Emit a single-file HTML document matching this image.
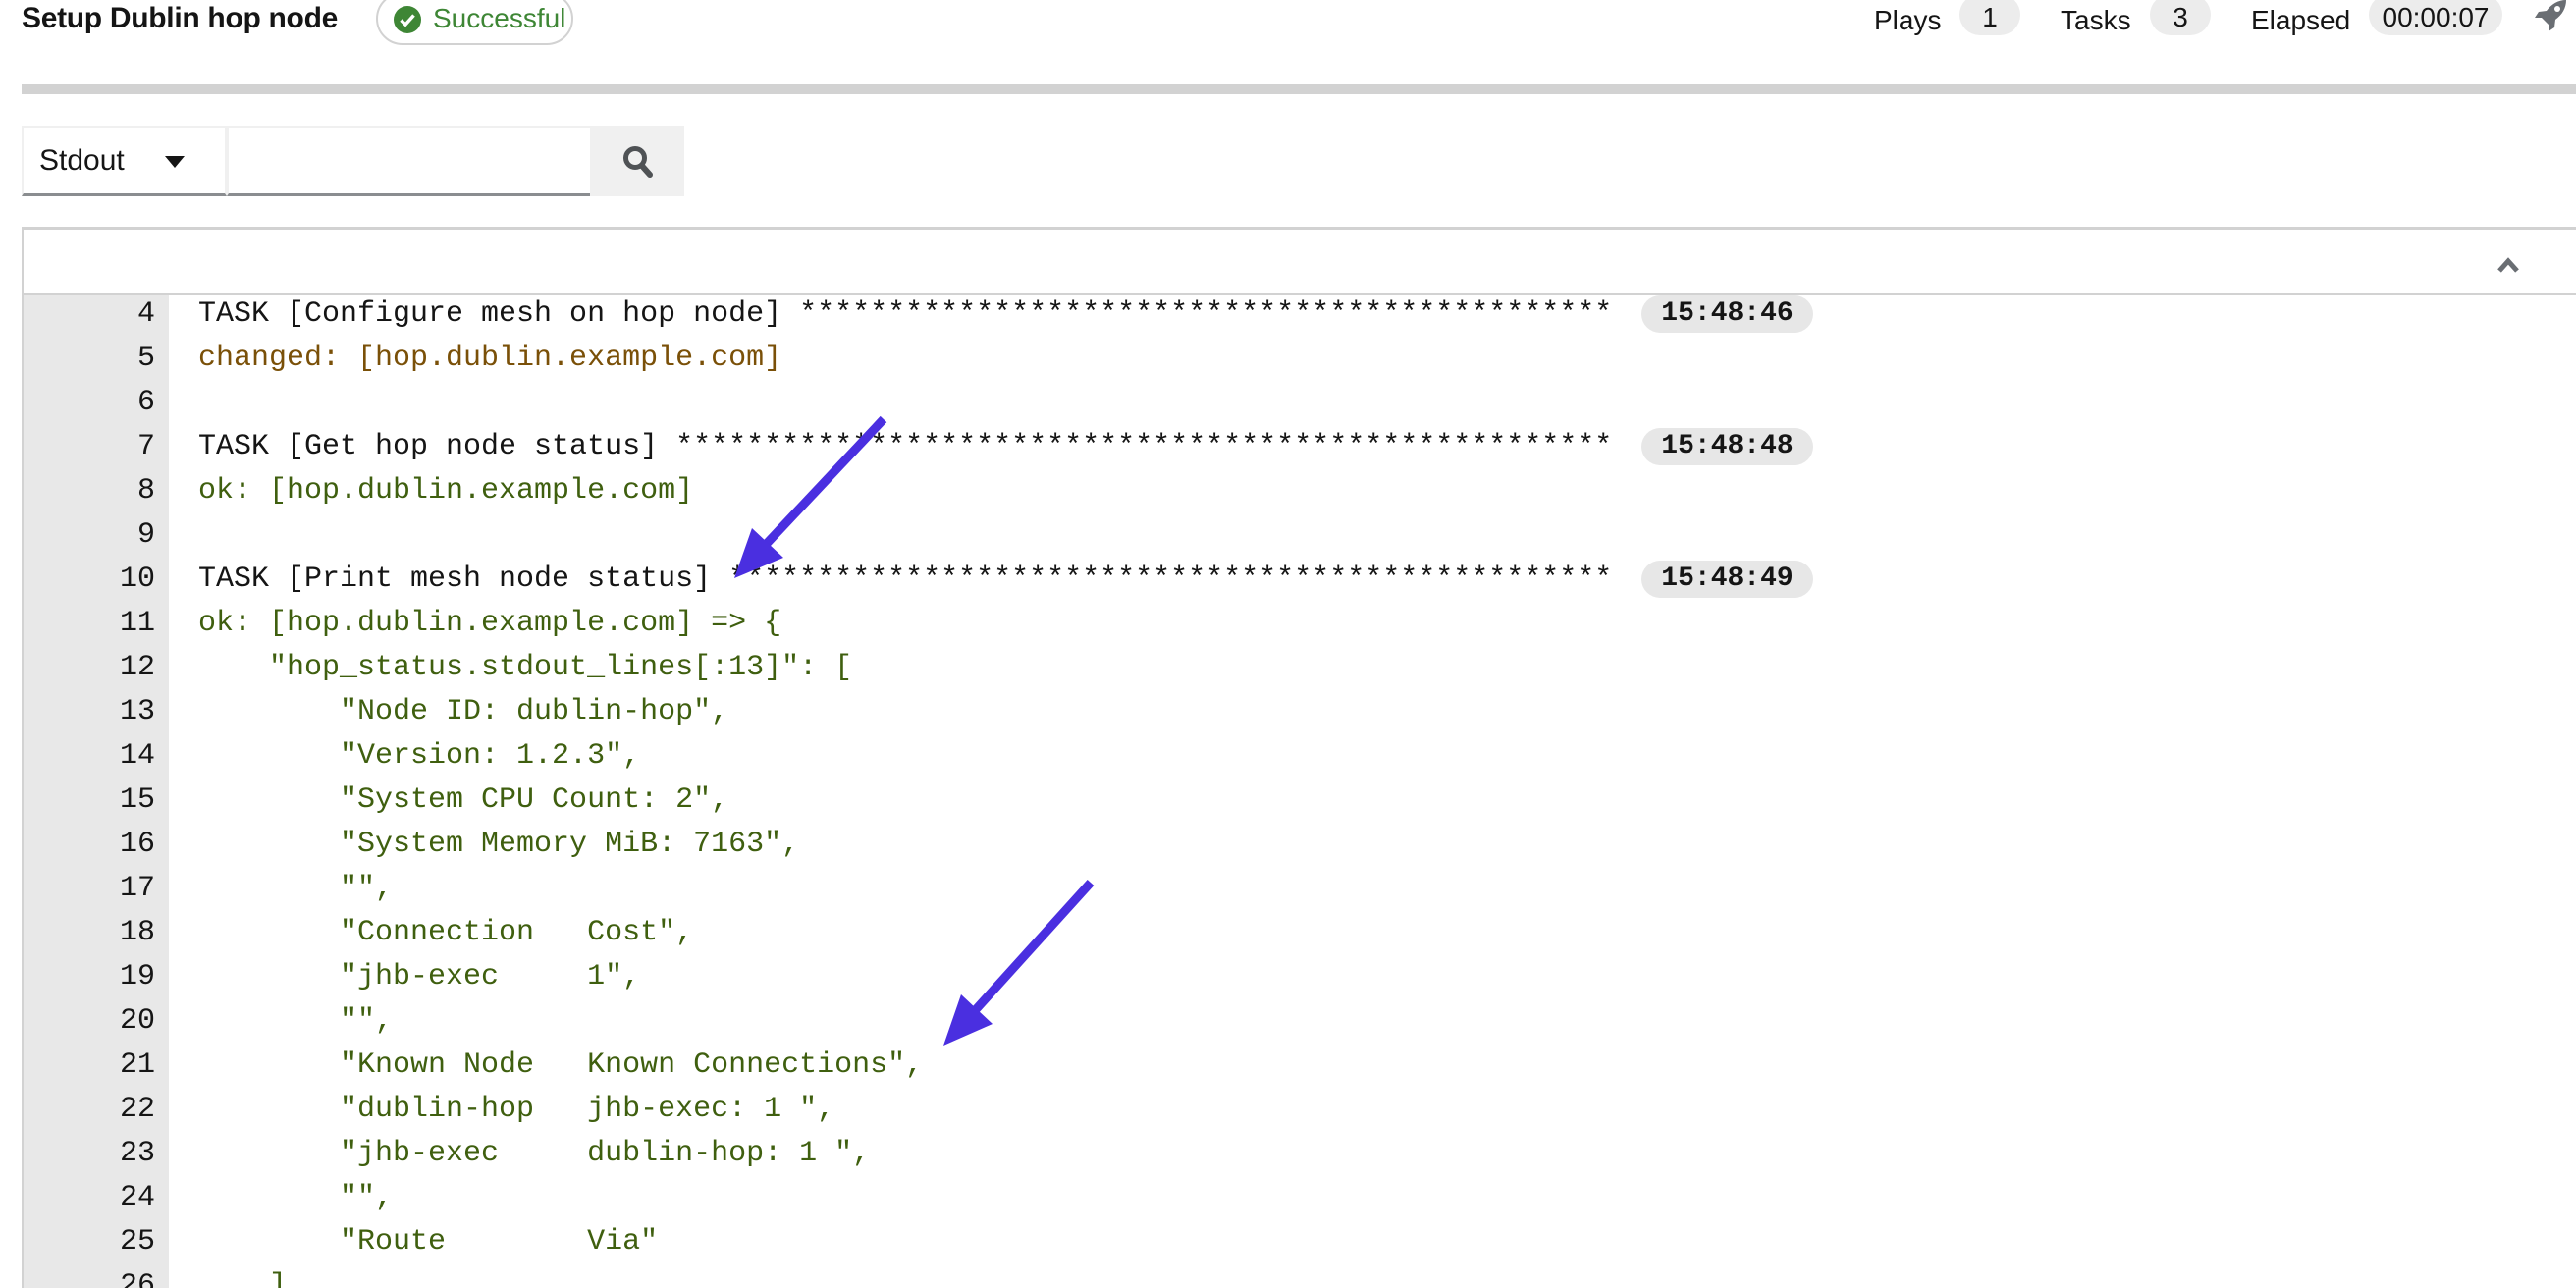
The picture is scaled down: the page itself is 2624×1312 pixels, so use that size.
<!DOCTYPE html>
<html><head><meta charset="utf-8"><style>
*{margin:0;padding:0;box-sizing:border-box}
body{width:2624px;height:1312px;overflow:hidden;background:#fff;position:relative;font-family:"Liberation Sans",sans-serif;color:#151515}
.abs{position:absolute}
.title{left:22px;top:0;font-size:30px;font-weight:bold;line-height:38px;letter-spacing:-0.3px}
.succ{left:383px;top:-8px;width:201px;height:54px;border:2px solid #d2d2d2;border-radius:27px;color:#3e8635;font-size:28px;line-height:50px;padding-left:56px}
.succ svg{position:absolute;left:16px;top:12px}
.lbl{font-size:28px;top:2px;line-height:38px}
.pill{top:-6px;height:42px;border-radius:21px;background:#ececec;font-size:28px;line-height:48px;text-align:center}
.bar{left:22px;top:86px;width:2602px;height:10px;background:#d2d2d2}
.sel{left:22px;top:128px;width:209px;height:72px;border:2px solid #f0f0f0;border-bottom:3px solid #8a8d90;font-size:30px;line-height:68px;padding-left:16px}
.inp{left:231px;top:128px;width:370px;height:72px;border-top:2px solid #f0f0f0;border-left:2px solid #f0f0f0;border-bottom:3px solid #8a8d90}
.btn{left:601px;top:128px;width:96px;height:72px;background:#f0f0f0}
.panel{left:22px;top:231px;width:2602px;height:70px;border-top:3px solid #d2d2d2;border-left:2px solid #d2d2d2;border-bottom:3px solid #d2d2d2}
.gut{left:22px;top:301px;width:150px;height:1011px;background:#e8e8e8;border-left:2px solid #d2d2d2}
.code{left:0;top:301px;width:2624px;height:1011px;overflow:hidden}
.lines{position:absolute;left:0;top:-3px;font-family:"Liberation Mono",monospace;font-size:30px;line-height:45px;white-space:pre}
.ln{position:absolute;left:0;width:158px;text-align:right;color:#151515}
.tx{position:absolute;left:202px}
.ts{position:absolute;left:1672px;width:175px;height:38px;border-radius:19px;background:#e7e7e7;font-family:"Liberation Mono",monospace;font-weight:bold;font-size:28px;line-height:38px;text-align:center;margin-top:3px}
.ch{color:#7a5008}.ok{color:#3f5f0f}
</style></head><body>
<div class="abs title">Setup Dublin hop node</div>
<div class="abs succ"><svg width="28" height="28" viewBox="0 0 28 28"><circle cx="14" cy="14" r="14" fill="#3e8635"/><path d="M7.5 14.5l4.5 4.5L20.5 9.5" stroke="#fff" stroke-width="3.5" fill="none"/></svg>Successful</div>
<div class="abs lbl" style="left:1909px">Plays</div>
<div class="abs pill" style="left:1996px;width:62px">1</div>
<div class="abs lbl" style="left:2099px">Tasks</div>
<div class="abs pill" style="left:2190px;width:62px">3</div>
<div class="abs lbl" style="left:2293px">Elapsed</div>
<div class="abs pill" style="left:2413px;width:136px">00:00:07</div>
<svg class="abs" style="left:2580px;top:0" width="36" height="34" viewBox="0 0 36 34"><path d="M34 0C26 0 19 4 14 11L6 12L2 18L9 18L16 25L16 32L22 28L23 20C30 15 34 8 34 0Z" fill="#6a6e73"/><circle cx="25" cy="9" r="3" fill="#fff"/></svg>
<div class="abs bar"></div>
<div class="abs sel">Stdout<svg style="position:absolute;left:144px;top:29px" width="20" height="12"><path d="M0 0H20L10 12Z" fill="#151515"/></svg></div>
<div class="abs inp"></div>
<div class="abs btn"><svg style="position:absolute;left:33px;top:20px" width="32" height="34" viewBox="0 0 32 34"><circle cx="13" cy="13" r="9.5" stroke="#4f5255" stroke-width="5" fill="none"/><path d="M20 21L28 30" stroke="#4f5255" stroke-width="6" stroke-linecap="round"/></svg></div>
<div class="abs panel"><svg style="position:absolute;left:2520px;top:28px" width="22" height="16"><path d="M2 14L11 4L20 14" stroke="#6a6e73" stroke-width="5" fill="none"/></svg></div>
<div class="abs gut"></div>
<div class="abs code"><div class="lines">
<div class="ln" style="top:0">4</div><div class="tx" style="top:0">TASK [Configure mesh on hop node] **********************************************</div><div class="ts" style="top:0">15:48:46</div>
<div class="ln" style="top:45px">5</div><div class="tx ch" style="top:45px">changed: [hop.dublin.example.com]</div>
<div class="ln" style="top:90px">6</div>
<div class="ln" style="top:135px">7</div><div class="tx" style="top:135px">TASK [Get hop node status] *****************************************************</div><div class="ts" style="top:135px">15:48:48</div>
<div class="ln" style="top:180px">8</div><div class="tx ok" style="top:180px">ok: [hop.dublin.example.com]</div>
<div class="ln" style="top:225px">9</div>
<div class="ln" style="top:270px">10</div><div class="tx" style="top:270px">TASK [Print mesh node status] **************************************************</div><div class="ts" style="top:270px">15:48:49</div>
<div class="ln" style="top:315px">11</div><div class="tx ok" style="top:315px">ok: [hop.dublin.example.com] =&gt; {</div>
<div class="ln" style="top:360px">12</div><div class="tx ok" style="top:360px">    "hop_status.stdout_lines[:13]": [</div>
<div class="ln" style="top:405px">13</div><div class="tx ok" style="top:405px">        "Node ID: dublin-hop",</div>
<div class="ln" style="top:450px">14</div><div class="tx ok" style="top:450px">        "Version: 1.2.3",</div>
<div class="ln" style="top:495px">15</div><div class="tx ok" style="top:495px">        "System CPU Count: 2",</div>
<div class="ln" style="top:540px">16</div><div class="tx ok" style="top:540px">        "System Memory MiB: 7163",</div>
<div class="ln" style="top:585px">17</div><div class="tx ok" style="top:585px">        "",</div>
<div class="ln" style="top:630px">18</div><div class="tx ok" style="top:630px">        "Connection   Cost",</div>
<div class="ln" style="top:675px">19</div><div class="tx ok" style="top:675px">        "jhb-exec     1",</div>
<div class="ln" style="top:720px">20</div><div class="tx ok" style="top:720px">        "",</div>
<div class="ln" style="top:765px">21</div><div class="tx ok" style="top:765px">        "Known Node   Known Connections",</div>
<div class="ln" style="top:810px">22</div><div class="tx ok" style="top:810px">        "dublin-hop   jhb-exec: 1 ",</div>
<div class="ln" style="top:855px">23</div><div class="tx ok" style="top:855px">        "jhb-exec     dublin-hop: 1 ",</div>
<div class="ln" style="top:900px">24</div><div class="tx ok" style="top:900px">        "",</div>
<div class="ln" style="top:945px">25</div><div class="tx ok" style="top:945px">        "Route        Via"</div>
<div class="ln" style="top:990px">26</div><div class="tx ok" style="top:990px">    ]</div>
</div></div>
<svg class="abs" style="left:0;top:0" width="2624" height="1312">
<line x1="900" y1="427" x2="775" y2="560" stroke="#4a2fe0" stroke-width="9"/>
<polygon points="748,589 798,568 766,538" fill="#4a2fe0"/>
<line x1="1111" y1="899" x2="988" y2="1035" stroke="#4a2fe0" stroke-width="9"/>
<polygon points="961,1065 1011,1043 979,1013" fill="#4a2fe0"/>
</svg>
</body></html>
